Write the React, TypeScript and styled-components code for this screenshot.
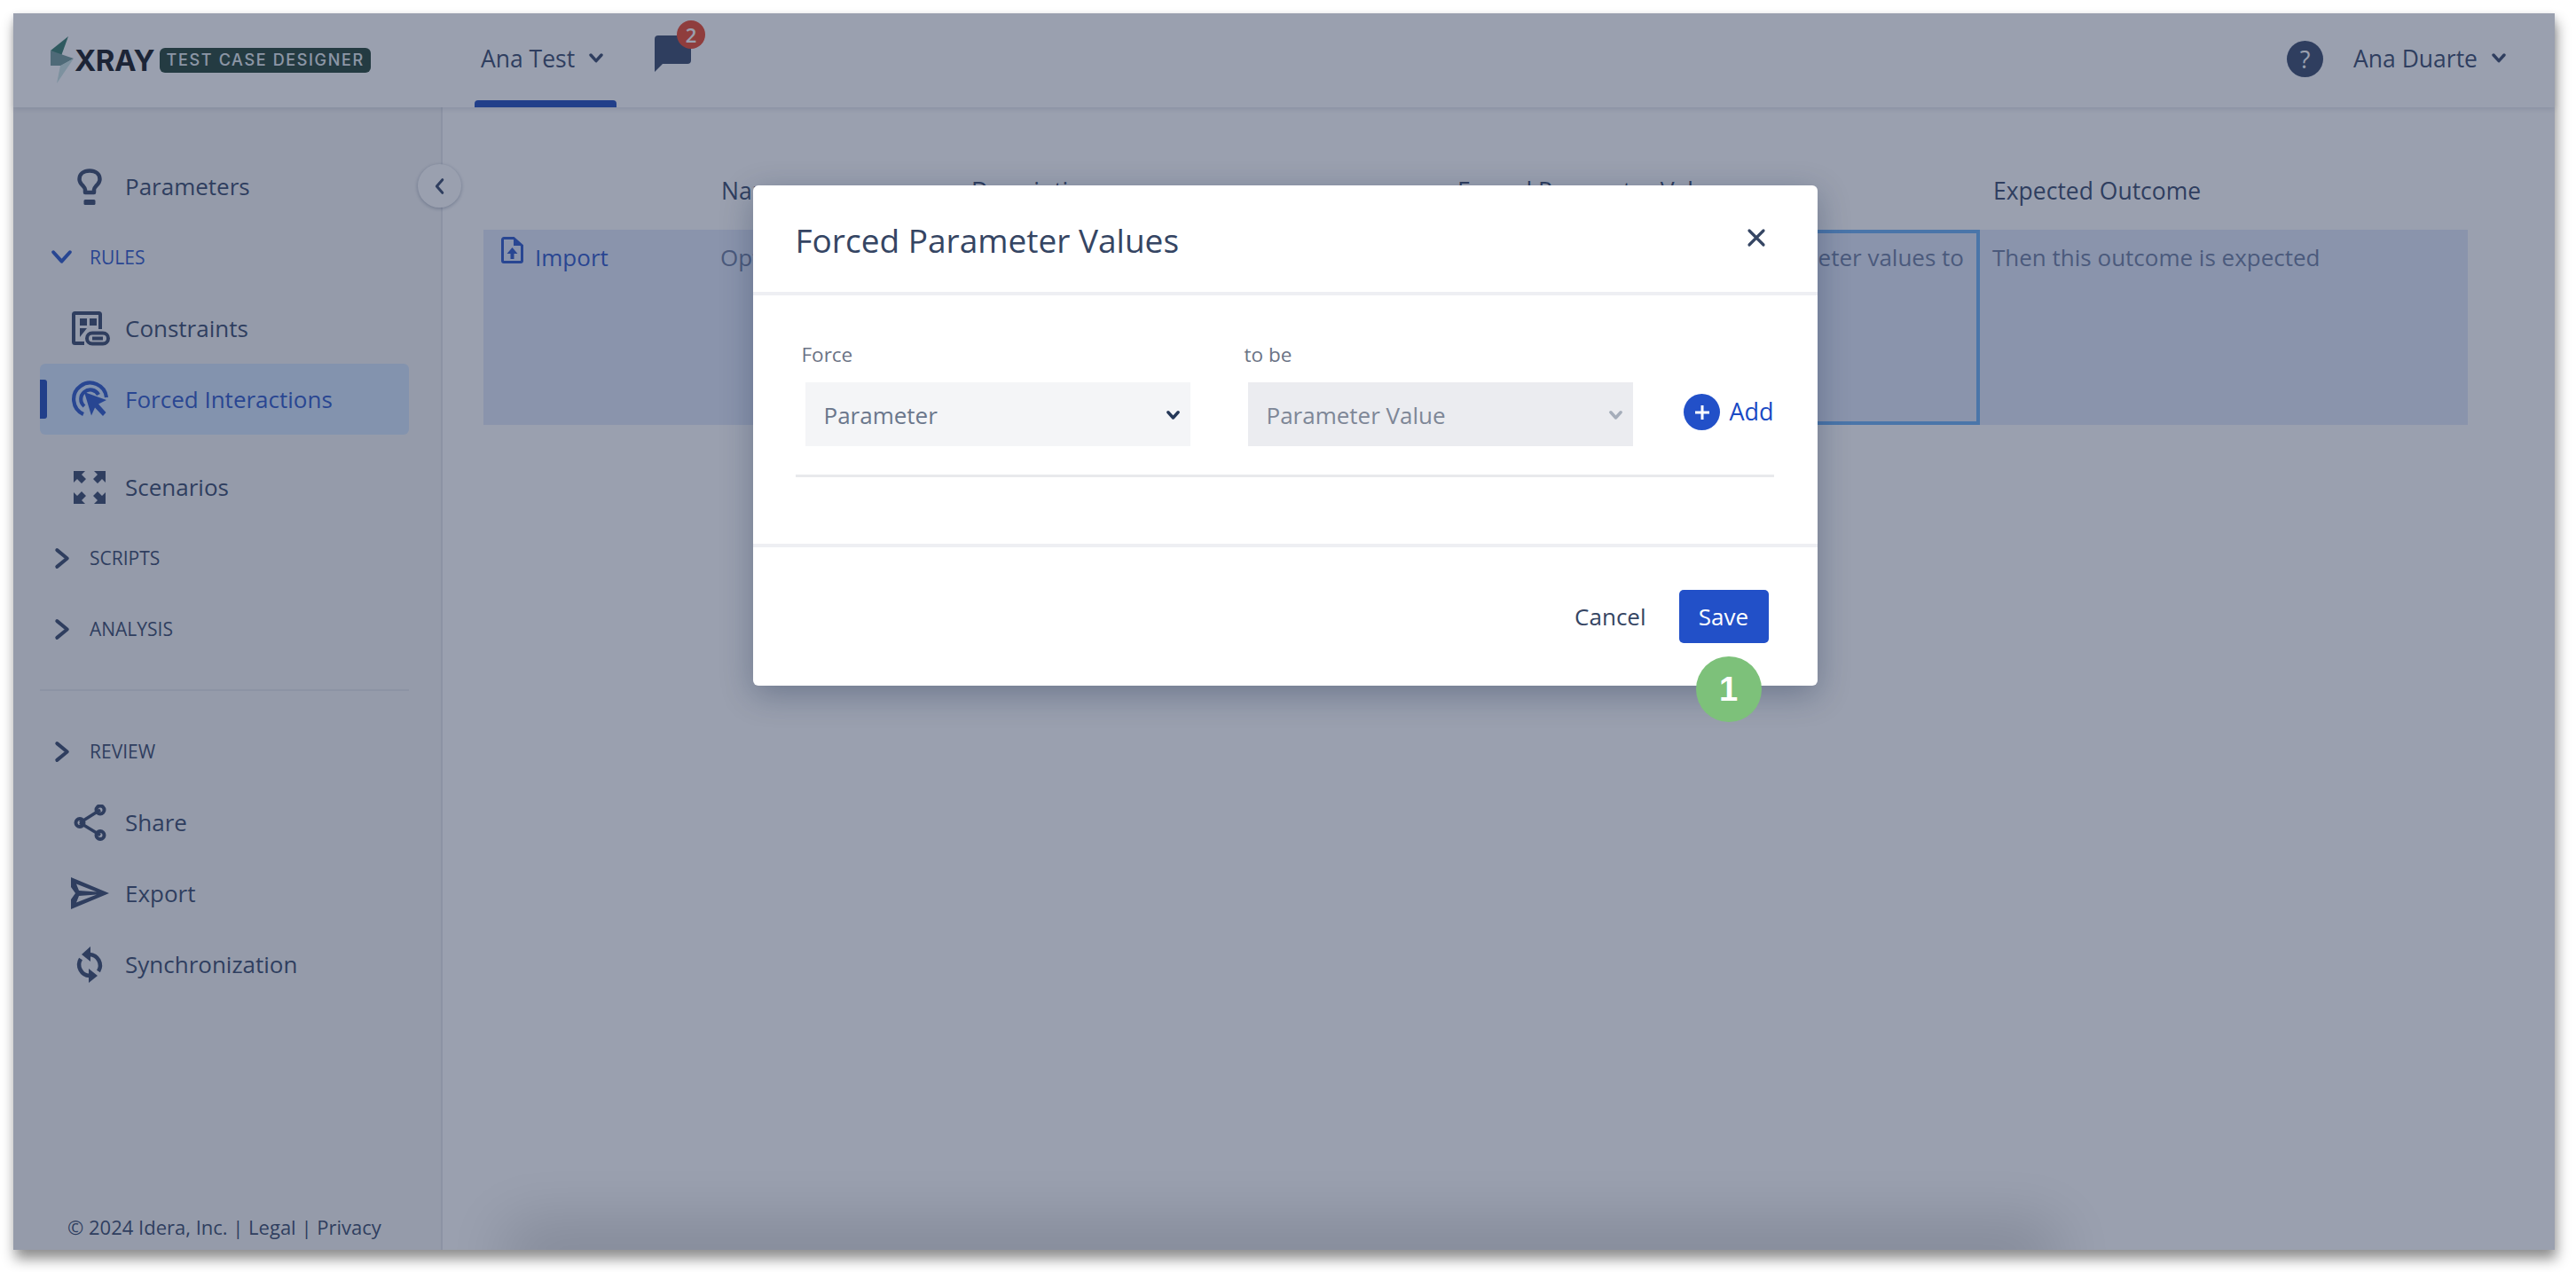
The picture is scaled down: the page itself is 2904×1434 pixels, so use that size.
import React from 'react'
import styled, { createGlobalStyle } from 'styled-components'

const GlobalStyle = createGlobalStyle`
  html, body {
    margin: 0;
    padding: 0;
    background: #fff;
  }
  body {
    font-family: "Open Sans", "Liberation Sans", sans-serif;
    color: #293b5f;
  }
  * {
    box-sizing: border-box;
  }
`

const Page = styled.div`
  width: 2904px;
  height: 1434px;
  padding: 15px 24px 25px 15px;
  overflow: hidden;
`

const Frame = styled.div`
  position: relative;
  height: 100%;
  display: flex;
  flex-direction: column;
  background: #fff;
  box-shadow: 2px 10px 14px rgba(0, 0, 0, 0.45);
`

const Header = styled.header`
  flex: 0 0 106px;
  display: flex;
  align-items: center;
  padding: 0 55px 0 42px;
  background: #fff;
  box-shadow: 0 2px 6px rgba(9, 30, 66, 0.14);
  position: relative;
  z-index: 1;
`

const Logo = styled.div`
  display: flex;
  align-items: center;
  width: 478px;
`

const LogoWord = styled.span`
  font-family: Inter, "Liberation Sans", sans-serif;
  font-weight: 700;
  font-size: 33px;
  letter-spacing: -0.5px;
  color: #03070d;
  margin-left: 0;
`

const LogoTag = styled.span`
  margin-left: 6px;
  width: 238px;
  height: 28px;
  border-radius: 6px;
  background: #133525;
  color: #e3ebed;
  font-family: Inter, "Liberation Sans", sans-serif;
  font-weight: 500;
  font-size: 18px;
  letter-spacing: 1.65px;
  line-height: 28px;
  text-align: center;
  white-space: nowrap;
`

const ProjectTab = styled.div`
  position: relative;
  width: 160px;
  height: 106px;
  display: flex;
  align-items: center;
  gap: 16px;
  padding: 0 0 4px 7px;
  font-size: 26.5px;
  color: #293b5f;

  &::after {
    content: '';
    position: absolute;
    left: 0;
    right: 0;
    bottom: 0;
    height: 8px;
    border-radius: 4px 4px 0 0;
    background: #0c3db5;
  }
`

const ChatButton = styled.div`
  position: relative;
  width: 41px;
  height: 41px;
  margin: -16px 0 0 43px;
`

const ChatBadge = styled.span`
  position: absolute;
  top: -17px;
  left: 25px;
  width: 32px;
  height: 32px;
  border-radius: 50%;
  background: #e9391b;
  color: #fff;
  font-size: 22px;
  font-weight: 600;
  line-height: 32px;
  text-align: center;
`

const HeaderRight = styled.div`
  margin-left: auto;
  margin-top: -4px;
  display: flex;
  align-items: center;
  font-size: 26.5px;
  color: #293b5f;
`

const HelpCircle = styled.span`
  width: 41px;
  height: 41px;
  border-radius: 50%;
  background: #293b5f;
  color: #fff;
  font-size: 27px;
  line-height: 41px;
  text-align: center;
  margin-right: 34px;
`

const UserName = styled.span`
  margin-right: 16px;
`

const Body = styled.div`
  flex: 1;
  display: flex;
  min-height: 0;
`

const Sidebar = styled.aside`
  position: relative;
  flex: 0 0 484px;
  display: flex;
  flex-direction: column;
  padding: 49px 36px 0 30px;
  background: #f5f5f5;
  border-right: 2px solid #e3e5e9;
`

const CollapseButton = styled.button`
  position: absolute;
  top: 64px;
  right: -23px;
  width: 49px;
  height: 49px;
  padding: 0;
  display: flex;
  align-items: center;
  justify-content: center;
  border: none;
  border-radius: 50%;
  background: #fff;
  box-shadow: 0 1px 4px rgba(9, 30, 66, 0.35);
  z-index: 2;
`

const NavItem = styled.div<{ $active?: boolean; $gapAfter?: number }>`
  position: relative;
  height: 80px;
  flex: 0 0 80px;
  display: flex;
  align-items: center;
  margin-bottom: ${(p) => p.$gapAfter ?? 0}px;
  border-radius: 6px;
  font-size: 26px;
  color: ${(p) => (p.$active ? '#1a4ac4' : '#293b5f')};
  background: ${(p) => (p.$active ? '#d1e5fd' : 'transparent')};

  &::before {
    content: ${(p) => (p.$active ? "''" : 'none')};
    position: absolute;
    left: 0;
    top: 18px;
    bottom: 18px;
    width: 8px;
    border-radius: 0 3px 3px 0;
    background: #0c3db5;
  }
`

const NavIcon = styled.span`
  flex: 0 0 60px;
  margin-left: 26px;
  margin-right: 10px;
  display: flex;
  justify-content: center;
  align-items: center;
`

const SectionRow = styled.div<{ $open?: boolean }>`
  height: 80px;
  flex: 0 0 80px;
  display: flex;
  align-items: center;
  padding-left: 12px;
  gap: 19px;
  font-size: 21px;
  color: ${(p) => (p.$open ? '#1a4ac4' : '#293b5f')};
`

const SideDivider = styled.hr`
  width: 100%;
  height: 2px;
  margin: 28px 0 28px;
  border: none;
  background: #e3e5e9;
`

const Copyright = styled.div`
  position: absolute;
  left: 61px;
  bottom: 10px;
  font-size: 22px;
  line-height: 32px;
  color: #293b5f;
  white-space: nowrap;
`

const Main = styled.main`
  position: relative;
  flex: 1;
  padding: 74px 97px 0 46px;
  overflow: hidden;
  background: #fff;
`

const BottomGlow = styled.div`
  position: absolute;
  left: 100px;
  right: 590px;
  bottom: -10px;
  height: 10px;
  box-shadow: 0 0 70px 30px rgba(0, 0, 0, 0.2);
`

const Table = styled.div`
  display: grid;
  grid-template-columns: 253px 282px 548px 604px 550px;
  grid-template-rows: 64px 220px;
`

const HeadCell = styled.div`
  padding-left: 15px;
  font-size: 26.5px;
  font-weight: 500;
  line-height: 40px;
  color: #293b5f;
  white-space: nowrap;
`

const Cell = styled.div<{ $focused?: boolean; $right?: boolean }>`
  background: #dfe7f9;
  padding: 13px 14px;
  font-size: 26px;
  line-height: 36px;
  color: #617399;
  white-space: nowrap;
  overflow: hidden;
  text-align: ${(p) => (p.$right ? 'right' : 'left')};
  border: ${(p) => (p.$focused ? '4px solid #5fa8f2' : 'none')};
  ${(p) => p.$focused && 'padding: 9px 14px 9px 10px;'}
`

const ImportLink = styled.span`
  display: flex;
  align-items: flex-start;
  gap: 13px;
  padding-left: 6px;
  color: #1a4ac4;
`

const Overlay = styled.div`
  position: absolute;
  inset: 0;
  z-index: 5;
  display: flex;
  justify-content: center;
  align-items: flex-start;
  padding: 194px 0 0 2px;
  background: rgba(53, 65, 95, 0.5);
`

const Modal = styled.div`
  position: relative;
  width: 1200px;
  height: 564px;
  display: flex;
  flex-direction: column;
  border-radius: 6px;
  background: #fff;
  box-shadow: 0 10px 36px rgba(9, 30, 66, 0.3);
`

const ModalHeader = styled.div`
  flex: 0 0 124px;
  display: flex;
  align-items: center;
  justify-content: space-between;
  padding: 2px 58px 0 48px;
  border-bottom: 4px solid #eeeff3;
`

const ModalTitle = styled.h2`
  margin: 0;
  font-size: 37px;
  font-weight: 400;
  color: #354563;
`

const CloseButton = styled.button`
  width: 22px;
  height: 22px;
  padding: 0;
  margin-top: -5px;
  border: none;
  background: none;
  display: flex;
`

const ModalBody = styled.div`
  flex: 0 0 284px;
  padding: 52px 49px 0 48px;
  border-bottom: 4px solid #eeeff3;
`

const FormRow = styled.div`
  display: flex;
  align-items: flex-end;
  padding-bottom: 32px;
  border-bottom: 3px solid #e8e9ec;
`

const Field = styled.div`
  width: 499px;
  display: flex;
  flex-direction: column;
  padding-left: 11px;

  & + & {
    width: 438px;
  }
`

const FieldLabel = styled.label`
  font-size: 22.5px;
  line-height: 30px;
  margin-bottom: 16px;
  margin-left: -4px;
  color: #6b7385;
`

const SelectBox = styled.div<{ $disabled?: boolean }>`
  width: 434px;
  height: 72px;
  display: flex;
  align-items: center;
  justify-content: space-between;
  padding: 2px 12px 0 21px;
  font-size: 26px;
  color: ${(p) => (p.$disabled ? '#7e8797' : '#6b778c')};
  background: ${(p) => (p.$disabled ? '#ebecf0' : '#f4f5f7')};
`

const AddButton = styled.div`
  margin: 0 0 18px auto;
  display: flex;
  align-items: center;
  gap: 10px;
  font-size: 27px;
  color: #1a4ac4;

  span + & {
    margin-top: 0;
  }
`

const AddLabel = styled.span`
  margin-top: -3px;
`

const AddCircle = styled.span`
  width: 41px;
  height: 41px;
  border-radius: 50%;
  background: #2250c8;
  display: flex;
  align-items: center;
  justify-content: center;
`

const ModalFooter = styled.div`
  flex: 1;
  display: flex;
  align-items: center;
  justify-content: flex-end;
  gap: 37px;
  padding-right: 55px;
`

const CancelLink = styled.span`
  font-size: 26px;
  color: #354563;
`

const SaveButton = styled.button`
  width: 101px;
  height: 60px;
  border: none;
  border-radius: 5px;
  background: #2250c8;
  color: #fff;
  font-family: inherit;
  font-size: 26px;
  font-weight: 500;
`

const StepBadge = styled.span`
  position: absolute;
  left: 1063px;
  top: 531px;
  width: 74px;
  height: 74px;
  border-radius: 50%;
  background: #7dc17a;
  color: #fff;
  font-family: "Liberation Sans", sans-serif;
  font-size: 38px;
  font-weight: 700;
  line-height: 74px;
  text-align: center;
`

const Chevron = ({ dir, size = 16, color = '#293b5f', weight = 3.4 }: { dir: 'down' | 'right' | 'left'; size?: number; color?: string; weight?: number }) => {
  const d = dir === 'down' ? 'M3 6l9 10 9-10' : dir === 'right' ? 'M7 3l11 9-11 9' : 'M15 4l-7 8 7 8'
  return (
    <svg width={size} height={size} viewBox="0 0 24 24" fill="none" stroke={color} strokeWidth={weight * (24 / size)} strokeLinecap="round" strokeLinejoin="round">
      <path d={d} />
    </svg>
  )
}

const BoltLogo = () => (
  <svg width="27" height="54" viewBox="0 0 27 54" style={{ flex: 'none' }}>
    <path d="M20 0L0 16 12 22z" fill="#297361" />
    <path d="M0 16L26 25 12 33H0z" fill="#699391" />
    <path d="M26 25L7 53 11 33z" fill="#c5e1df" />
  </svg>
)

const BulbIcon = () => (
  <svg width="28" height="41" viewBox="0 0 28 41" fill="none">
    <path d="M9 27v-3.2c0-1.6-1-2.7-2.3-4.1C4.1 17.200 2.500 15 2.500 12 2.500 6 7.500 2.500 14 2.500S25.500 6 25.500 12c0 3-1.600 5.200-4.200 7.700-1.300 1.400-2.300 2.500-2.300 4.100V27z" stroke="#293b5f" strokeWidth="4.5" strokeLinejoin="round" />
    <rect x="7.500" y="35" width="13" height="6" rx="1.500" fill="#293b5f" />
  </svg>
)

const ConstraintsIcon = () => (
  <svg width="43" height="39" viewBox="0 0 43 39" fill="none" style={{ marginLeft: 3 }}>
    <path d="M14 36H3.500A1.500 1.500 0 0 1 2 34.500V3.500A1.500 1.500 0 0 1 3.500 2h27A1.500 1.500 0 0 1 32 3.500V20" stroke="#293b5f" strokeWidth="4" />
    <rect x="9" y="8" width="8" height="8" fill="#293b5f" />
    <rect x="20" y="8" width="8" height="8" fill="#293b5f" />
    <path d="M9 19h8l-8 10z" fill="#293b5f" />
    <rect x="17" y="24.500" width="24" height="12" rx="6" stroke="#293b5f" strokeWidth="4" />
    <path d="M23 30.500h12" stroke="#293b5f" strokeWidth="4" />
  </svg>
)

const ForcedIcon = () => (
  <svg width="43" height="42" viewBox="0 0 43 42" fill="none" stroke="#1a4ac4" strokeWidth="4.200">
    <path d="M14 38A18.500 18.500 0 1 1 40 19" />
    <path d="M15 29A10.500 10.500 0 1 1 31 16" />
    <path d="M15 13l25 9-9 4.500L39.500 36l-3.500 4-9-9.500-4 9z" fill="#1a4ac4" stroke="none" />
  </svg>
)

const ScenariosIcon = () => (
  <svg width="36" height="37" viewBox="0 0 36 37" fill="#293b5f">
    <path d="M0 0h13l-4 4 5 5-5 5-5-5-4 4z" />
    <path d="M36 0H23l4 4-5 5 5 5 5-5 4 4z" />
    <path d="M0 37h13l-4-4 5-5-5-5-5 5-4-4z" />
    <path d="M36 37H23l4-4-5-5 5-5 5 5 4-4z" />
  </svg>
)

const ShareIcon = () => (
  <svg width="37" height="41" viewBox="0 0 37 41" fill="none" stroke="#293b5f">
    <path d="M7 20.500L30 6M7 20.500L30 34.500" strokeWidth="3.500" />
    <circle cx="7" cy="20.500" r="4.500" strokeWidth="4" />
    <circle cx="30" cy="6" r="4.500" strokeWidth="4" />
    <circle cx="30" cy="34.500" r="4.500" strokeWidth="4" />
  </svg>
)

const ExportIcon = () => (
  <svg width="43" height="36" viewBox="0 0 43 36" fill="#293b5f" fillRule="evenodd">
    <path d="M0 0L43 18 0 36V25L5 18 0 11zM6 7.500L9 15 29 16.500zM6 28.500L9 21 29 19.500z" />
  </svg>
)

const SyncIcon = () => (
  <svg width="34" height="45" viewBox="0 0 34 45" fill="none">
    <path d="M17 11A12.500 12.500 0 0 1 27 30" stroke="#293b5f" strokeWidth="4.500" />
    <path d="M17 35A12.500 12.500 0 0 1 7 16" stroke="#293b5f" strokeWidth="4.500" />
    <path d="M18 2L8 11l10 8z" fill="#293b5f" />
    <path d="M16 43l10-8-10-8z" fill="#293b5f" />
  </svg>
)

const ChatIcon = () => (
  <svg width="41" height="41" viewBox="0 0 41 41" style={{ display: 'block' }}>
    <path d="M4 0h33a4 4 0 0 1 4 4v24a4 4 0 0 1-4 4H9l-9 9V4a4 4 0 0 1 4-4z" fill="#293b5f" />
  </svg>
)

const FileUpIcon = () => (
  <svg width="25" height="30" viewBox="0 0 25 30" fill="none" style={{ marginTop: -5, flex: 'none' }}>
    <path d="M3 1.500h11L23.500 10v17A1.500 1.500 0 0 1 22 28.500H3A1.500 1.500 0 0 1 1.500 27V3A1.500 1.500 0 0 1 3 1.500z" stroke="#1a4ac4" strokeWidth="3" />
    <path d="M14 1.500V10h9.500z" fill="#1a4ac4" />
    <path d="M12.500 12l-6 7h4v6h4v-6h4z" fill="#1a4ac4" />
  </svg>
)

const App = () => {
  return (
    <Page>
      <GlobalStyle />
      <Frame>
        <Header>
          <Logo>
            <BoltLogo />
            <LogoWord>XRAY</LogoWord>
            <LogoTag>TEST CASE DESIGNER</LogoTag>
          </Logo>
          <ProjectTab>
            Ana Test
            <Chevron dir="down" size={16} />
          </ProjectTab>
          <ChatButton>
            <ChatIcon />
            <ChatBadge>2</ChatBadge>
          </ChatButton>
          <HeaderRight>
            <HelpCircle>?</HelpCircle>
            <UserName>Ana Duarte</UserName>
            <Chevron dir="down" size={16} />
          </HeaderRight>
        </Header>
        <Body>
          <Sidebar>
            <CollapseButton>
              <Chevron dir="left" size={22} weight={3} />
            </CollapseButton>
            <NavItem>
              <NavIcon><BulbIcon /></NavIcon>
              Parameters
            </NavItem>
            <SectionRow $open>
              <Chevron dir="down" size={25} color="#1a4ac4" weight={4} />
              RULES
            </SectionRow>
            <NavItem>
              <NavIcon><ConstraintsIcon /></NavIcon>
              Constraints
            </NavItem>
            <NavItem $active $gapAfter={19}>
              <NavIcon><ForcedIcon /></NavIcon>
              Forced Interactions
            </NavItem>
            <NavItem>
              <NavIcon><ScenariosIcon /></NavIcon>
              Scenarios
            </NavItem>
            <SectionRow>
              <Chevron dir="right" size={25} weight={4} />
              SCRIPTS
            </SectionRow>
            <SectionRow>
              <Chevron dir="right" size={25} weight={4} />
              ANALYSIS
            </SectionRow>
            <SideDivider />
            <SectionRow>
              <Chevron dir="right" size={25} weight={4} />
              REVIEW
            </SectionRow>
            <NavItem>
              <NavIcon><ShareIcon /></NavIcon>
              Share
            </NavItem>
            <NavItem>
              <NavIcon><ExportIcon /></NavIcon>
              Export
            </NavItem>
            <NavItem>
              <NavIcon><SyncIcon /></NavIcon>
              Synchronization
            </NavItem>
            <Copyright>© 2024 Idera, Inc. | Legal | Privacy</Copyright>
          </Sidebar>
          <Main>
            <Table>
              <HeadCell />
              <HeadCell>Name</HeadCell>
              <HeadCell>Description</HeadCell>
              <HeadCell>Forced Parameter Values</HeadCell>
              <HeadCell>Expected Outcome</HeadCell>
              <Cell>
                <ImportLink><FileUpIcon />Import</ImportLink>
              </Cell>
              <Cell>Option</Cell>
              <Cell />
              <Cell $focused $right>Force these parameter values to</Cell>
              <Cell>Then this outcome is expected</Cell>
            </Table>
            <BottomGlow />
          </Main>
        </Body>
        <Overlay>
          <Modal>
            <ModalHeader>
              <ModalTitle>Forced Parameter Values</ModalTitle>
              <CloseButton aria-label="Close">
                <svg width="22" height="22" viewBox="0 0 22 22" stroke="#354563" strokeWidth="3.200" strokeLinecap="round">
                  <path d="M3 3l16 16M19 3L3 19" />
                </svg>
              </CloseButton>
            </ModalHeader>
            <ModalBody>
              <FormRow>
                <Field>
                  <FieldLabel>Force</FieldLabel>
                  <SelectBox>
                    Parameter
                    <Chevron dir="down" size={15} weight={3.4} color="#253858" />
                  </SelectBox>
                </Field>
                <Field>
                  <FieldLabel>to be</FieldLabel>
                  <SelectBox $disabled>
                    Parameter Value
                    <Chevron dir="down" size={15} weight={3.4} color="#a5adba" />
                  </SelectBox>
                </Field>
                <AddButton>
                  <AddCircle>
                    <svg width="20" height="20" viewBox="0 0 20 20" stroke="#fff" strokeWidth="3">
                      <path d="M10 2v16M2 10h16" />
                    </svg>
                  </AddCircle>
                  <AddLabel>Add</AddLabel>
                </AddButton>
              </FormRow>
            </ModalBody>
            <ModalFooter>
              <CancelLink>Cancel</CancelLink>
              <SaveButton>Save</SaveButton>
            </ModalFooter>
            <StepBadge>1</StepBadge>
          </Modal>
        </Overlay>
      </Frame>
    </Page>
  )
}

export default App
